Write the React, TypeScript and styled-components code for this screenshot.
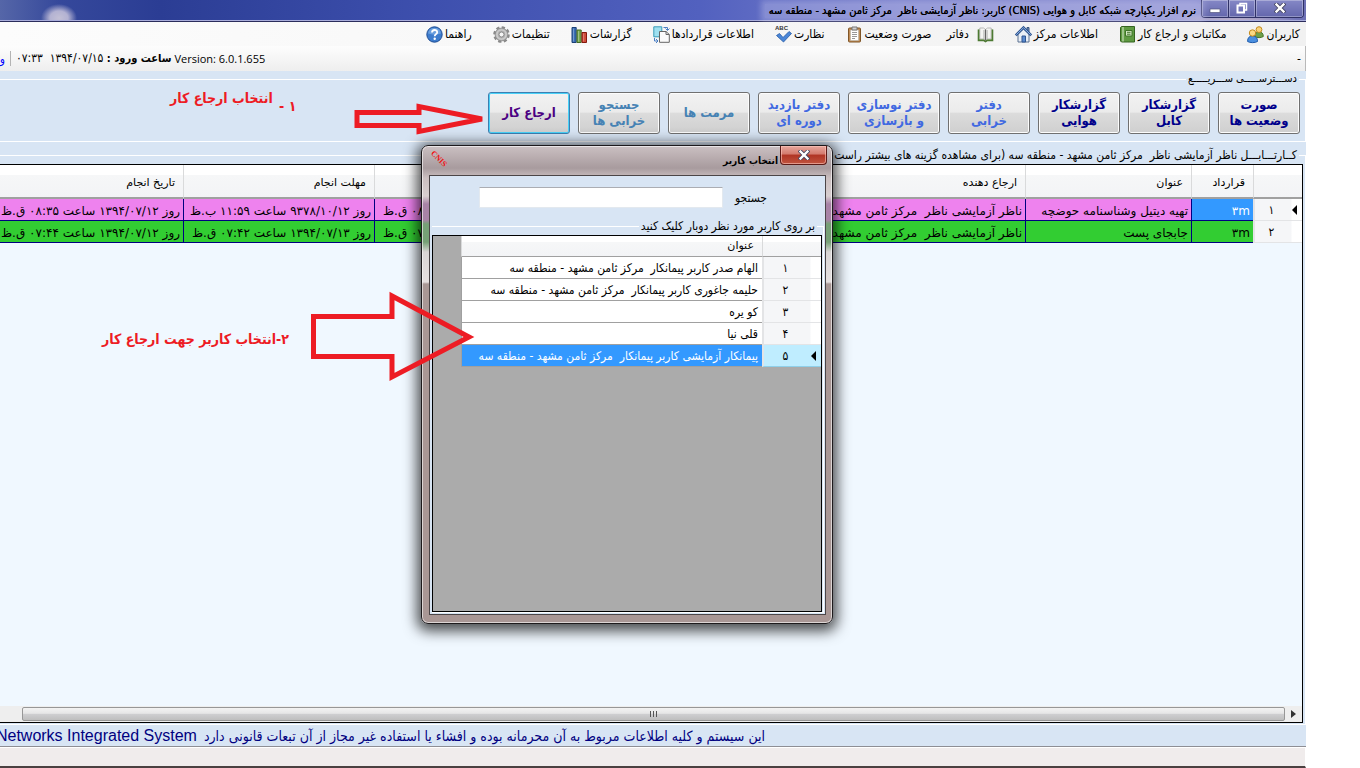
import React from "react";
import styled, { createGlobalStyle, css } from "styled-components";

const sans = `"Open Sans", "DejaVu Sans Condensed", sans-serif`;
const tahoma = `"DejaVu Sans Condensed", "DejaVu Sans", sans-serif`;
const tahomaWide = `"DejaVu Sans", sans-serif`;

const GlobalStyle = createGlobalStyle`
  * { box-sizing: border-box; }
  body { margin: 0; background: #fff; font-family: ${tahoma}; font-size: 12px; color: #000; overflow: hidden; }
`;

const Desktop = styled.div`
  direction: rtl;
  padding-right: 54px;
`;

const Window = styled.div`
  position: relative;
  display: flex;
  flex-direction: column;
  height: 100vh;
  min-height: 640px;
  overflow: hidden;
  background: #d8e5f4;
`;

const TitleBar = styled.header`
  display: flex;
  align-items: flex-start;
  height: 22px;
  padding-right: 2px;
  border-bottom: 1px solid #2b2d5c;
  box-shadow: inset 0 -1px 0 #a9addb;
  background:
    radial-gradient(ellipse 18px 14px at 59px 18px, #c3c0d6 0, #b3b2d2 50%, transparent 100%),
    radial-gradient(ellipse 70px 12px at calc(100% - 72px) 24px, rgba(225, 205, 205, 0.9), transparent),
    linear-gradient(to right, #5566a8 0, #35489b 60px, #2b3d94 160px, #3d4fad 420px, #5261bf 700px, #7a80cc 900px, #8d90d2 1190px, #6d70b4 100%);
`;

const CaptionButtons = styled.div`
  display: flex;
  height: 18px;
  border: 1px solid #2f3166;
  border-top: 0;
  border-radius: 0 0 4px 4px;
  overflow: hidden;
`;

const CaptionButton = styled.button<{ $wide?: boolean }>`
  width: ${(p) => (p.$wide ? 47 : 27)}px;
  padding: 0 0 1px;
  border: 0;
  border-right: 1px solid #2f3166;
  box-shadow: inset 0 0 0 1px rgba(255, 255, 255, 0.3);
  background: linear-gradient(#8588c6, #6366ac);
  line-height: 0;
  &:first-child { border-right: 0; }
`;

const Title = styled.h1`
  margin: 4px 1px 0 0;
  padding: 0 4px;
  font: 400 11px/14px ${tahoma};
  white-space: pre;
  text-shadow: 0 0 0 #000;
  background: rgba(205, 205, 240, 0.35);
  box-shadow: 0 0 6px 4px rgba(205, 205, 240, 0.35);
`;

const MenuBar = styled.nav`
  display: flex;
  align-items: center;
  gap: 21px;
  height: 24px;
  flex: none;
  padding-right: 6px;
  background: linear-gradient(to right, #fcfcfc, #f1f1f1);
`;

const MenuItem = styled.button<{ $iconFirst?: boolean }>`
  display: flex;
  flex-direction: ${(p) => (p.$iconFirst ? "row-reverse" : "row")};
  align-items: center;
  gap: ${(p) => (p.$iconFirst ? 8 : 2)}px;
  margin-left: ${(p) => (p.$iconFirst ? -6 : 0)}px;
  padding: 0;
  border: 0;
  background: none;
  color: #000;
  font: 12px/20px ${tahoma};
  white-space: nowrap;
  svg { flex: none; direction: ltr; overflow: visible; }
`;

const InfoBar = styled.div`
  display: flex;
  align-items: center;
  justify-content: space-between;
  flex: none;
  height: 25px;
  padding-right: 4px;
  border-right: 1px solid #b9b9b9;
  background: linear-gradient(#fdfdfd, #eee);
  font: 12px/16px ${tahoma};
`;

const InfoGroup = styled.div`
  display: flex;
  align-items: center;
  white-space: pre;
`;

const Version = styled.span`
  font: 11px/16px ${sans};
`;

const LoginTime = styled.span`
  margin-right: 3px;
  b { font-size: 11px; }
`;

const Divider = styled.i`
  width: 1px;
  height: 15px;
  margin: 0 5px;
  background: #b4b4b4;
`;

const BlueText = styled.span`
  width: 5px;
  color: #00f;
`;

const Group = styled.fieldset<{ $grow?: boolean }>`
  display: flex;
  flex-direction: column;
  min-width: 0;
  margin: 0;
  padding: 0;
  border: 1px solid #fff;
  border-left: 0;
  ${(p) => p.$grow && css`flex: 1; min-height: 0; margin-top: 5px;`}
`;

const Legend = styled.legend`
  margin-right: 6px;
  padding: 0 2px;
  font: 12px/16px ${tahoma};
  white-space: pre;
`;

const SmallLegend = styled(Legend)`
  font-size: 11px;
`;

const QuickButtons = styled.div`
  display: flex;
  gap: 8px;
  padding: 5px 5px 7px;
`;

const QuickButton = styled.button<{ $tone: string; $focused?: boolean; $wide?: boolean }>`
  width: ${(p) => (p.$wide ? 92 : 82)}px;
  height: 42px;
  flex: none;
  padding: 0;
  border: 1px solid ${(p) => (p.$focused ? "#3c7fb1" : "#707070")};
  border-radius: 3px;
  box-shadow: inset 0 0 0 1px ${(p) => (p.$focused ? "#48d1f8" : "#fcfcfc")};
  background: linear-gradient(#f2f2f2 0, #ebebeb 48%, #dcdcdc 50%, #cfcfcf 100%);
  color: ${(p) => p.$tone};
  font: bold 13px/16px ${tahoma};
  white-space: pre;
`;

const GridBox = styled.div`
  display: flex;
  flex-direction: column;
  flex: 1;
  min-height: 0;
  margin: 1px 2px 1px 0;
  border: 1px solid #000;
  border-left: 0;
  background: #f0f8ff;
  overflow: hidden;
`;

const GridArea = styled.div`
  flex: 1;
  min-height: 0;
  overflow: hidden;
`;

const Table = styled.table`
  table-layout: fixed;
  width: 1329px;
  border-collapse: separate;
  border-spacing: 0;
  font: 12px/14px ${tahoma};
`;

const HeadCell = styled.th`
  height: 34px;
  padding: 4px 8px 0;
  border-left: 1px solid #d9dadb;
  border-bottom: 2px solid #a0a0a0;
  background: linear-gradient(#fff 0, #fff 30%, #f6f7f8 32%, #f3f4f6 100%);
  font: 11px/14px ${tahomaWide};
  text-align: right;
`;

const RowHead = styled.th<{ $selected?: boolean }>`
  position: relative;
  height: 22px;
  padding: 0 14px 0 0;
  border-left: 2px solid #e3e4e6;
  border-bottom: 1px solid ${(p) => (p.$selected ? "#8fd0ea" : "#e3e4e6")};
  background: ${(p) => (p.$selected ? "#bfedff" : "linear-gradient(to left, #fff 10px, #f5f6f8 11px)")};
  font-weight: 400;
`;

const Marker = styled.i`
  position: absolute;
  right: 5px;
  top: 6px;
  border: 5px solid transparent;
  border-right: 5px solid #000;
  border-left-width: 0;
`;

const Cell = styled.td<{ $fill: string; $active?: boolean; $wide?: boolean }>`
  height: 22px;
  padding: 3px 3px 0;
  border-left: 1px solid #000080;
  border-bottom: 1px solid #000080;
  background: ${(p) => (p.$active ? "#3399ff" : p.$fill)};
  color: ${(p) => (p.$active ? "#fff" : "#000")};
  font-family: ${(p) => (p.$wide ? tahomaWide : tahoma)};
  white-space: pre;
  overflow: hidden;
`;

const ScrollBar = styled.div`
  display: flex;
  height: 16px;
  padding-left: 22px;
  background: #eee;
`;

const ScrollArrow = styled.button`
  width: 17px;
  padding: 0;
  border: 0;
  background: none;
  line-height: 0;
`;

const ScrollThumb = styled.div`
  display: flex;
  align-items: center;
  justify-content: center;
  gap: 2px;
  flex: 1;
  margin: 1px 0;
  border: 1px solid #979797;
  border-radius: 2px;
  background: linear-gradient(#f3f3f3 0, #e6e6e6 45%, #cfcfd1 50%, #bebebe 100%);
  i { width: 1px; height: 6px; background: #555; }
`;

const Notice = styled.footer`
  display: flex;
  align-items: center;
  gap: 7px;
  flex: none;
  height: 22px;
  padding-right: 541px;
  border-bottom: 1px solid #8e8e94;
  color: #000080;
  font: 14px/20px ${tahoma};
  white-space: nowrap;
`;

const SystemName = styled.span`
  font: 16px/20px "Liberation Sans", sans-serif;
`;

const StatusStrip = styled.div`
  flex: none;
  height: 21px;
  border: 1px solid #fff;
  border-left: 0;
  border-bottom: 2px solid #4a4040;
  background: #f0ecec;
`;

const Dialog = styled.section`
  position: absolute;
  top: 145px;
  left: 421px;
  display: flex;
  flex-direction: column;
  width: 412px;
  height: 479px;
  padding: 0 6px 8px 7px;
  border: 1px solid #1d1a1c;
  border-radius: 7px;
  box-shadow: 0 3px 14px 4px rgba(0, 0, 0, 0.7), inset 0 0 0 1px rgba(255, 255, 255, 0.6);
  background: linear-gradient(
    #cbc0c2 0, #a89b9e 22px, #cbbfc0 32px, #d8cfd0 50px, #a883a6 58px, #a883a6 74px,
    #76a076 78px, #76a076 96px, #d9d5d5 106px, #e6e0e0 136px, #a99795 138px, #a99795 100%
  );
`;

const DialogTitleBar = styled.header`
  display: flex;
  align-items: flex-start;
  height: 29px;
  flex: none;
  h2 { margin: 7px 2px 0 auto; font: bold 10px/16px ${tahoma}; }
`;

const DialogClose = styled.button`
  width: 47px;
  height: 19px;
  margin-right: -1px;
  padding: 0;
  border: 1px solid #5c1a17;
  border-top: 0;
  border-radius: 0 0 4px 4px;
  box-shadow: inset 0 0 0 1px rgba(255, 200, 190, 0.6);
  background: linear-gradient(#e8a79d 0, #d37a6d 45%, #b03424 50%, #c0543f 100%);
  line-height: 0;
`;

const Brand = styled.span`
  margin: 8px 2px 0 0;
  color: #f01010;
  font: bold 8px/10px "Liberation Serif", serif;
  transform: rotate(45deg);
`;

const DialogBody = styled.div`
  display: flex;
  flex-direction: column;
  flex: 1;
  min-height: 0;
  padding: 11px 1px 1px 2px;
  border: 1px solid #4b4547;
  background: #d8e5f4;
`;

const SearchRow = styled.div`
  display: flex;
  align-items: center;
  gap: 12px;
  margin: 0 57px 5px 0;
  label { font: 12px/16px ${tahoma}; }
`;

const SearchInput = styled.input`
  width: 244px;
  height: 21px;
  padding: 0 4px;
  border: 1px solid #e3e9ef;
  border-top-color: #abadb3;
  background: #fff;
  font: 12px/16px ${tahoma};
`;

const UserGrid = styled.div`
  flex: 1;
  min-height: 0;
  margin: 1px 1px 0 0;
  border: 1px solid #000;
  background: #ababab;
  overflow: hidden;
`;

const UserTable = styled(Table)`
  width: 360px;
`;

const UserHeadCell = styled(HeadCell)`
  height: 21px;
  padding-top: 0;
  border-bottom-width: 1px;
`;

const UserCell = styled(Cell)`
  padding: 1px 4px 0;
  border-left-color: #a0a0a0;
  border-bottom-color: #a0a0a0;
`;

const Arrows = styled.svg`
  position: absolute;
  top: 0;
  left: 0;
  pointer-events: none;
`;

const Note = styled.p<{ $x: number; $y: number }>`
  position: absolute;
  left: ${(p) => p.$x}px;
  top: ${(p) => p.$y}px;
  margin: 0;
  color: #ed1c24;
  font: bold 14px/20px ${tahoma};
  white-space: pre;
`;

const CloseGlyph = () => (
  <svg width="12" height="10" viewBox="0 0 12 10">
    <path d="M2.5 1.5 9.5 8.5M9.5 1.5 2.5 8.5" stroke="#444460" strokeWidth="4" strokeLinecap="square" />
    <path d="M2.5 1.5 9.5 8.5M9.5 1.5 2.5 8.5" stroke="#fff" strokeWidth="2.4" strokeLinecap="square" />
  </svg>
);

const Icon = ({ children }: { children: React.ReactNode }) => (
  <svg width="17" height="17" viewBox="0 0 17 17" fill="none">{children}</svg>
);

const icons = {
  users: (
    <Icon>
      <path d="M7.500 10.500c0-3 2-4.500 4.500-4.500s4.300 1.200 4.300 4.500c-2 1.500-6.300 1.500-8.800 0z" fill="#6fa04a" stroke="#47762a" />
      <circle cx="12" cy="3.600" r="2.900" fill="#f9d27a" stroke="#c48a1c" />
      <path d="M.6 15.500c0-4 2-5.500 4.900-5.500s5 1.500 5 5.500c-2.500 1.500-7.500 1.500-9.900 0z" fill="#4a8fe0" stroke="#1f5bab" />
      <circle cx="5.500" cy="7" r="3.200" fill="#fbd983" stroke="#c48a1c" />
    </Icon>
  ),
  letters: (
    <Icon>
      <path d="M2.500.5h13v15.500h-13l-1-1v-13.500z" fill="#5f9a42" stroke="#356420" />
      <path d="M4 1v14.500" stroke="#dcebd0" />
      <path d="M6.500 4.500h6.500v5.500h-6.500z" fill="#d5e9c6" stroke="#3f7328" />
      <path d="M8 6.300h3.500M8 8.200h3.500" stroke="#3f7328" />
    </Icon>
  ),
  home: (
    <Icon>
      <path d="M3 8v8h11V8L8.500 3z" fill="#e8eef6" stroke="#5b7090" />
      <path d="M12 1.500h2v5l-2-2z" fill="#6d89b5" stroke="#38557f" />
      <path d="M.8 9.300 8.500 1.500l7.700 7.800" stroke="#2f5590" strokeWidth="2.600" />
      <path d="M1.300 8.700 8.500 1.700 15.700 8.700" stroke="#8cb0e2" strokeWidth="1" />
      <path d="M7 10h3.500v6H7z" fill="#5a8bd0" stroke="#2f5590" />
    </Icon>
  ),
  book: (
    <Icon>
      <path d="M1.500 3.500v11h5.500l1.500 1 1.500-1h5.500v-11" fill="#7fae5b" stroke="#4d7a33" strokeWidth="1.600" />
      <path d="M2.800 2h3.700l2 1.500v10.500l-2-1H2.800zM14.200 2h-3.700l-2 1.500v10.500l2-1h3.700z" fill="#f4f4f2" stroke="#aaa" strokeWidth=".8" />
      <path d="M7 4v9M10 4v9" stroke="#b5b5b5" strokeWidth="1.200" />
      <path d="M8.500 3.500V14.500" stroke="#666" />
    </Icon>
  ),
  clipboard: (
    <Icon>
      <rect x="2.500" y="2" width="12" height="14" rx="1" fill="#c08c55" stroke="#805628" />
      <path d="M4.500 4h8v10.500h-8z" fill="#fff" stroke="#b9b3aa" strokeWidth=".6" />
      <path d="M6 6.500h5M6 8.500h5M6 10.500h5M6 12.500h3" stroke="#8c8c8c" strokeWidth=".9" />
      <path d="M6 1h5v3H6z" fill="#d0d0d0" stroke="#777" />
    </Icon>
  ),
  check: (
    <Icon>
      <text x="0" y="4" fontFamily="Liberation Sans" fontSize="6" fontWeight="700" fill="#333">ABC</text>
      <path d="M1.500 9.500 4.500 7.500 8 11.500 14 5.500 16.500 7.500 8.500 16z" fill="#4a86d8" stroke="#2559a3" strokeWidth=".8" />
    </Icon>
  ),
  contracts: (
    <Icon>
      <path d="M.8.800h8v10h-8z" fill="#9fe0f0" stroke="#3a9cb8" />
      <path d="M6.500 5.500h6.500l3.300 3V16.300H6.500z" fill="#fbfbfb" stroke="#666" />
      <path d="M13 5.500v3h3.300" stroke="#666" />
      <path d="M10.500 1.500h4v2.500M12.500 2.500l2 2 2-2M1.500 12v3h3M3 13l2 2-2 2" stroke="#4a7fc5" />
    </Icon>
  ),
  reports: (
    <Icon>
      <path d="M1 1.500h4.200v15H1z" fill="#3a6fb5" stroke="#1c4076" />
      <path d="M6 4h4.200v12.500H6z" fill="#77a850" stroke="#436c26" />
      <path d="M11 6.500h4.500v10H11z" fill="#cf4a38" stroke="#85190e" />
      <path d="M2.500 2.500v13M7.500 5v10.500M12.600 7.500v8" stroke="#fff" strokeOpacity=".3" />
    </Icon>
  ),
  gear: (
    <Icon>
      <circle cx="8.500" cy="8.500" r="7" stroke="#8a8a8a" strokeWidth="2.600" strokeDasharray="3.200 2.300" />
      <circle cx="8.500" cy="8.500" r="6.400" fill="#b4b4b4" stroke="#8a8a8a" strokeWidth=".8" />
      <circle cx="8.500" cy="8.500" r="4.600" stroke="#cfcfcf" strokeWidth="1.400" />
      <circle cx="8.500" cy="8.500" r="2.500" fill="#f5f5f5" stroke="#777" strokeWidth=".8" />
    </Icon>
  ),
  help: (
    <Icon>
      <circle cx="8.500" cy="8.500" r="7.700" fill="#3d7ccd" stroke="#1e4d94" />
      <path d="M2 7.500a6.600 6.600 0 0 1 13 0c-4 1.500-9 1.500-13 0z" fill="#7eaee6" fillOpacity=".7" />
      <path d="M6 6.500c0-3.300 5.200-3.300 5.200-.3 0 2-2.500 1.900-2.500 4" stroke="#fff" strokeWidth="1.800" />
      <circle cx="8.700" cy="12.800" r="1.200" fill="#fff" />
    </Icon>
  ),
};

const menu: { label: string; icon: keyof typeof icons; iconFirst?: boolean }[] = [
  { label: "کاربران", icon: "users" },
  { label: "مکاتبات و ارجاع کار", icon: "letters" },
  { label: "اطلاعات مرکز", icon: "home" },
  { label: "دفاتر", icon: "book", iconFirst: true },
  { label: "صورت وضعیت", icon: "clipboard" },
  { label: "نظارت", icon: "check" },
  { label: "اطلاعات قراردادها", icon: "contracts" },
  { label: "گزارشات", icon: "reports" },
  { label: "تنظیمات", icon: "gear" },
  { label: "راهنما", icon: "help" },
];

const quick = [
  { label: "صورت\nوضعیت ها", tone: "#00008b" },
  { label: "گزارشکار\nکابل", tone: "#00008b" },
  { label: "گزارشکار\nهوایی", tone: "#00008b" },
  { label: "دفتر\nخرابی", tone: "#4169e1" },
  { label: "دفتر نوسازی\nو بازسازی", tone: "#4169e1", wide: true },
  { label: "دفتر بازدید\nدوره ای", tone: "#4169e1" },
  { label: "مرمت ها", tone: "#4682b4" },
  { label: "جستجو\nخرابی ها", tone: "#4682b4" },
  { label: "ارجاع کار", tone: "#4b0082", focused: true },
];

const sender = "ناظر آزمایشی ناظر  مرکز ثامن مشهد - منطقه سه";

const tasks = [
  {
    fill: "#ee82ee",
    cells: ["۳m", "تهیه دیتیل وشناسنامه حوضچه", sender, "روز ۱۳۹۴/۰۷/۱۲ ساعت ۰۸:۳۱ ق.ظ", "روز ۹۳۷۸/۱۰/۱۲ ساعت ۱۱:۵۹ ب.ظ", "روز ۱۳۹۴/۰۷/۱۲ ساعت ۰۸:۳۵ ق.ظ"],
  },
  {
    fill: "#32cd32",
    cells: ["۳m", "جابجای پست", sender, "روز ۱۳۹۴/۰۷/۱۲ ساعت ۰۷:۴۲ ق.ظ", "روز ۱۳۹۴/۰۷/۱۳ ساعت ۰۷:۴۲ ق.ظ", "روز ۱۳۹۴/۰۷/۱۲ ساعت ۰۷:۴۴ ق.ظ"],
  },
];

const people = [
  "الهام صدر کاربر پیمانکار  مرکز ثامن مشهد - منطقه سه",
  "حلیمه جاغوری کاربر پیمانکار  مرکز ثامن مشهد - منطقه سه",
  "کو یره",
  "قلی نیا",
  "پیمانکار آزمایشی کاربر پیمانکار  مرکز ثامن مشهد - منطقه سه",
];

const digits = ["۱", "۲", "۳", "۴", "۵"];

export default function App() {
  return (
    <Desktop>
      <GlobalStyle />
      <Window>
        <TitleBar>
          <CaptionButtons>
            <CaptionButton $wide aria-label="بستن"><CloseGlyph /></CaptionButton>
            <CaptionButton aria-label="بازگردانی">
              <svg width="12" height="12" viewBox="0 0 12 12" fill="none">
                <path d="M4 3V1.500h6.500V8H9" stroke="#fff" strokeWidth="1.500" />
                <rect x="1.500" y="3.500" width="6.500" height="7" stroke="#fff" strokeWidth="2" />
              </svg>
            </CaptionButton>
            <CaptionButton aria-label="کوچک کردن">
              <svg width="12" height="12" viewBox="0 0 12 12"><path d="M1 7h10v3.500H1z" fill="#fff" stroke="#555680" strokeWidth=".7" /></svg>
            </CaptionButton>
          </CaptionButtons>
          <Title>نرم افزار یکپارچه شبکه کابل و هوایی (CNIS) کاربر: ناظر آزمایشی ناظر  مرکز ثامن مشهد - منطقه سه</Title>
        </TitleBar>
        <MenuBar>
          {menu.map((m) => (
            <MenuItem key={m.label} $iconFirst={m.iconFirst}>
              <span>{m.label}</span>
              {icons[m.icon]}
            </MenuItem>
          ))}
        </MenuBar>
        <InfoBar>
          <span>-</span>
          <InfoGroup>
            <Version dir="ltr">Version: 6.0.1.655</Version>
            <LoginTime><b>ساعت ورود : </b>۱۳۹۴/۰۷/۱۵  ۰۷:۳۳</LoginTime>
            <Divider />
            <BlueText>و</BlueText>
          </InfoGroup>
        </InfoBar>
        <Group>
          <SmallLegend>دســـترســـــی ســـریـــــع</SmallLegend>
          <QuickButtons>
            {quick.map((q) => (
              <QuickButton key={q.label} $tone={q.tone} $focused={q.focused} $wide={q.wide}>{q.label}</QuickButton>
            ))}
          </QuickButtons>
        </Group>
        <Group $grow>
          <Legend>کــارتـــابـــل ناظر آزمایشی ناظر  مرکز ثامن مشهد - منطقه سه (برای مشاهده گزینه های بیشتر راست کلیک کنید)</Legend>
          <GridBox>
            <GridArea>
              <Table>
                <colgroup>
                  <col style={{ width: 49 }} />
                  <col style={{ width: 62 }} />
                  <col style={{ width: 166 }} />
                  <col style={{ width: 460 }} />
                  <col style={{ width: 191 }} />
                  <col style={{ width: 191 }} />
                  <col style={{ width: 210 }} />
                </colgroup>
                <thead>
                  <tr>
                    <HeadCell />
                    <HeadCell>قرارداد</HeadCell>
                    <HeadCell>عنوان</HeadCell>
                    <HeadCell>ارجاع دهنده</HeadCell>
                    <HeadCell />
                    <HeadCell>مهلت انجام</HeadCell>
                    <HeadCell>تاریخ انجام</HeadCell>
                  </tr>
                </thead>
                <tbody>
                  {tasks.map((t, row) => (
                    <tr key={row}>
                      <RowHead>{row === 0 && <Marker />}{digits[row]}</RowHead>
                      {t.cells.map((c, i) => (
                        <Cell key={i} $fill={t.fill} $active={row === 0 && i === 0} $wide>{c}</Cell>
                      ))}
                    </tr>
                  ))}
                </tbody>
              </Table>
            </GridArea>
            <ScrollBar>
              <ScrollArrow aria-label="راست">
                <svg width="5" height="8" viewBox="0 0 5 8"><path d="M0 0 5 4 0 8z" fill="#333" /></svg>
              </ScrollArrow>
              <ScrollThumb><i /><i /><i /></ScrollThumb>
            </ScrollBar>
          </GridBox>
        </Group>
        <Notice>
          <span>این سیستم و کلیه اطلاعات مربوط به آن محرمانه بوده و افشاء یا استفاده غیر مجاز از آن تبعات قانونی دارد</span>
          <SystemName dir="ltr">Networks Integrated System</SystemName>
        </Notice>
        <StatusStrip />

        <Dialog role="dialog" aria-label="انتخاب کاربر">
          <DialogTitleBar>
            <DialogClose aria-label="بستن"><CloseGlyph /></DialogClose>
            <h2>انتخاب کاربر</h2>
            <Brand>CNIS</Brand>
          </DialogTitleBar>
          <DialogBody>
            <SearchRow>
              <label htmlFor="search">جستجو</label>
              <SearchInput id="search" type="text" />
            </SearchRow>
            <Group $grow>
              <Legend>بر روی کاربر مورد نظر دوبار کلیک کنید</Legend>
              <UserGrid>
                <UserTable>
                  <colgroup>
                    <col style={{ width: 59 }} />
                    <col />
                  </colgroup>
                  <thead>
                    <tr>
                      <UserHeadCell />
                      <UserHeadCell>عنوان</UserHeadCell>
                    </tr>
                  </thead>
                  <tbody>
                    {people.map((name, i) => (
                      <tr key={name}>
                        <RowHead $selected={i === 4}>{i === 4 && <Marker />}{digits[i]}</RowHead>
                        <UserCell $fill="#fff" $active={i === 4}>{name}</UserCell>
                      </tr>
                    ))}
                  </tbody>
                </UserTable>
              </UserGrid>
            </Group>
          </DialogBody>
        </Dialog>

        <Note $x={170} $y={88}>انتخاب ارجاع کار</Note>
        <Note $x={279} $y={96}>۱ -</Note>
        <Note $x={102} $y={329}>۲-انتخاب کاربر جهت ارجاع کار</Note>
        <Arrows width="500" height="400" viewBox="0 0 500 400" fill="none" stroke="#ed1c24" strokeWidth="5">
          <path d="M357 112.500h62v-6L482 119l-63 12.500v-6h-62z" />
          <path d="M313.500 316.500H392V296l77 41-77 40v-20.500h-78.500z" />
        </Arrows>
      </Window>
    </Desktop>
  );
}
